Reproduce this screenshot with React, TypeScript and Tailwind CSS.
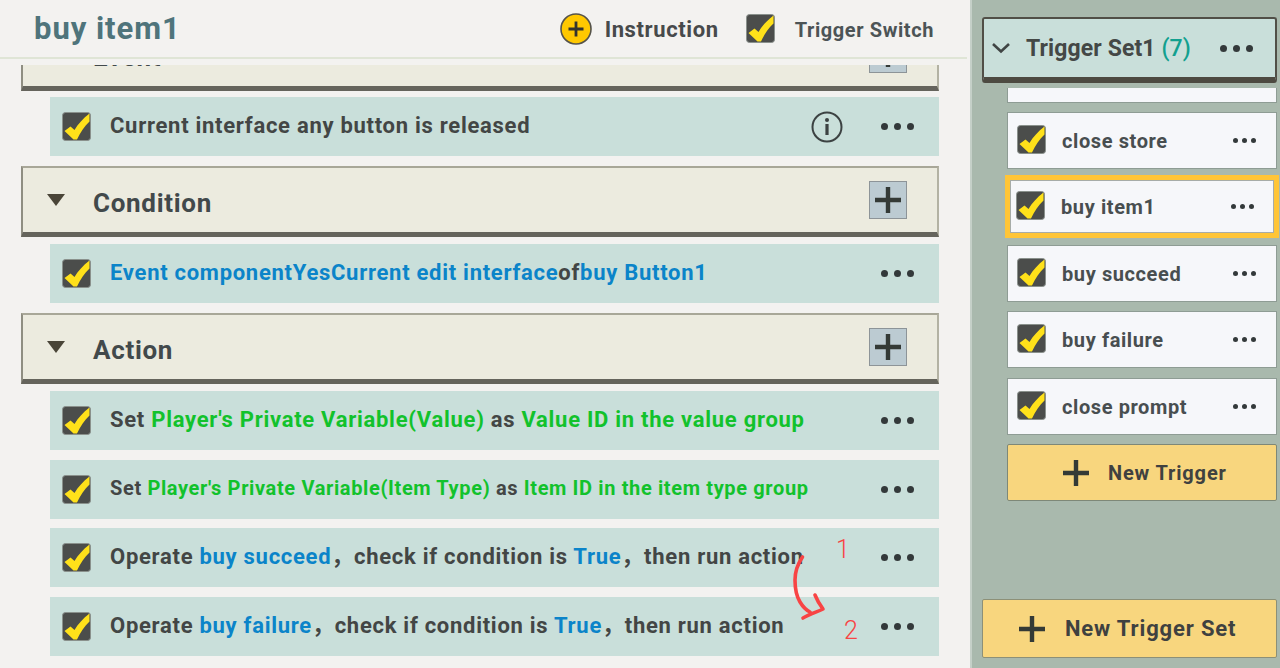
import type { ReactNode } from "react";

const font = { fontFamily: "Roboto, 'Noto Sans CJK SC', sans-serif" };

function Check({ className = "" }: { className?: string }) {
  return (
    <svg viewBox="0 0 29 29" className={`h-[29px] w-[29px] shrink-0 ${className}`}>
      <rect x="0.5" y="0.5" width="28" height="28" rx="3" fill="#4b4d4b" stroke="#8a918c" />
      <path d="M2.5 19 L8.5 14.5 L12.5 18 C16 12 21 6.5 27.5 1.5 L27.5 9.5 C22.5 14 18.5 20 15 27.5 L11.5 27.5 Z" fill="#ffe11a" />
    </svg>
  );
}

function Dots({ big = false }: { big?: boolean }) {
  const dot = big ? "h-[7px] w-[7px]" : "h-[5px] w-[5px]";
  return (
    <div className={`flex items-center ${big ? "gap-[6px]" : "gap-[4px]"}`}>
      <span className={`${dot} rounded-full bg-[#33393a]`} />
      <span className={`${dot} rounded-full bg-[#33393a]`} />
      <span className={`${dot} rounded-full bg-[#33393a]`} />
    </div>
  );
}

function Plus({ size = 26 }: { size?: number }) {
  return (
    <svg width={size} height={size} viewBox="0 0 26 26" className="shrink-0">
      <path d="M10.8 0h4.4v10.8H26v4.4H15.2V26h-4.4V15.2H0v-4.4h10.8z" fill="#343a36" />
    </svg>
  );
}

function SectionHeader({ title, className = "" }: { title: string; className?: string }) {
  return (
    <div
      className={`flex h-[71px] items-center border-t-2 border-r-2 border-b-[5px] border-l-2 border-t-[#a8a798] border-r-[#b3b2a3] border-b-[#65645c] border-l-[#8f8e82] bg-[#ecebdf] pr-[30px] pl-[24px] ${className}`}
    >
      <span className="h-0 w-0 border-x-[9px] border-t-[12px] border-x-transparent border-t-[#4a4538]" />
      <span className="mt-[6px] ml-[28px] text-[26px] font-bold tracking-[0.7px] text-[#42494b]">{title}</span>
      <span className="ml-auto flex h-[38px] w-[38px] items-center justify-center border border-[#8d9498] bg-[#bccbd2]">
        <Plus />
      </span>
    </div>
  );
}

function Row({ children, info = false, small = false }: { children: ReactNode; info?: boolean; small?: boolean }) {
  return (
    <div className="ml-[29px] flex h-[59px] items-center bg-[#c9dfda] pr-[25px] pl-[12px]">
      <Check />
      <div
        className={`ml-[19px] whitespace-pre font-bold text-[#434645] ${
          small ? "-mt-[3px] text-[20px] tracking-[0.63px]" : "-mt-[2px] text-[22px] tracking-[0.72px]"
        }`}
      >
        {children}
      </div>
      {info && (
        <svg viewBox="0 0 32 32" className="mr-[38px] ml-auto h-[32px] w-[32px]">
          <circle cx="16" cy="16" r="14.5" fill="none" stroke="#3c4242" strokeWidth="2" />
          <circle cx="16" cy="9" r="2" fill="#3c4242" />
          <rect x="14.4" y="13" width="3.2" height="11" fill="#3c4242" />
        </svg>
      )}
      <div className={info ? "" : "ml-auto"}>
        <Dots big />
      </div>
    </div>
  );
}

function Blue({ children }: { children: ReactNode }) {
  return <span className="text-[#0b84c9]">{children}</span>;
}

function Green({ children }: { children: ReactNode }) {
  return <span className="text-[#12c22c]">{children}</span>;
}

function TriggerItem({ name, className = "" }: { name: string; className?: string }) {
  return (
    <div className={`flex items-center bg-[#f6f7fa] pr-[20px] ${className}`}>
      <Check className="-mt-[2px]" />
      <span className="ml-[16px] text-[20px] font-bold tracking-[0.6px] text-[#484e50]">{name}</span>
      <div className="-mt-[1px] ml-auto">
        <Dots />
      </div>
    </div>
  );
}

export default function App() {
  return (
    <div className="relative flex h-[668px] w-[1280px] overflow-hidden bg-[#f3f2f0]" style={font}>
      <div className="flex w-[967px] shrink-0 flex-col">
        <header className="flex h-[59px] shrink-0 items-center border-b-2 border-[#dfe5d6] pr-[33px] pl-[34px]">
          <h1 className="mt-[1px] text-[31px] font-bold tracking-[0.95px] text-[#4f747b]">buy item1</h1>
          <svg viewBox="0 0 32 32" className="ml-auto h-[32px] w-[32px]">
            <circle cx="16" cy="16" r="15" fill="#ffc800" stroke="#55534a" strokeWidth="1.6" />
            <path d="M14.6 8.5h2.8v6.1h6.1v2.8h-6.1v6.1h-2.8v-6.1H8.5v-2.8h6.1z" fill="#33332e" />
          </svg>
          <span className="mt-[2px] ml-[13px] text-[22px] font-bold tracking-[0.6px] text-[#474a4b]">Instruction</span>
          <Check className="ml-[27px]" />
          <span className="mt-[2px] ml-[20px] text-[20px] font-bold tracking-[0.6px] text-[#4c5456]">Trigger Switch</span>
        </header>
        <div className="mt-[6px] min-h-0 flex-1 overflow-hidden pr-[28px] pl-[21px]">
          <div className="-mt-[45px] flex flex-col">
            <SectionHeader title="Event" />
            <div className="mt-[6px]">
              <Row info>Current interface any button is released</Row>
            </div>
            <SectionHeader title="Condition" className="mt-[10px]" />
            <div className="mt-[7px]">
              <Row>
                <Blue>Event componentYesCurrent edit interface</Blue>of<Blue>buy Button1</Blue>
              </Row>
            </div>
            <SectionHeader title="Action" className="mt-[10px]" />
            <div className="mt-[7px] flex flex-col gap-[10px]">
              <Row>
                Set <Green>Player's Private Variable(Value)</Green> as <Green>Value ID in the value group</Green>
              </Row>
              <Row small>
                Set <Green>Player's Private Variable(Item Type)</Green> as <Green>Item ID in the item type group</Green>
              </Row>
              <div className="-mt-px">
                <Row>
                  Operate <Blue>buy succeed</Blue>，check if condition is <Blue>True</Blue>，then run action
                </Row>
              </div>
              <Row>
                Operate <Blue>buy failure</Blue>，check if condition is <Blue>True</Blue>，then run action
              </Row>
            </div>
          </div>
        </div>
      </div>

      <aside className="ml-[3px] flex min-w-0 flex-1 flex-col border-l-2 border-[#c5d0c8] bg-[#a9b9ad] pr-[3px] pl-[10px]">
        <div className="mt-[17px] flex h-[66px] shrink-0 items-center rounded-[3px] border-t-2 border-r-2 border-b-[6px] border-l-2 border-t-[#514f47] border-r-[#514f47] border-b-[#4d4a41] border-l-[#514f47] bg-[#c9dfda] pr-[22px] pl-[7px]">
          <svg viewBox="0 0 20 12" className="h-[12px] w-[20px]">
            <path d="M2 2l8 7.5L18 2" fill="none" stroke="#404544" strokeWidth="2.6" />
          </svg>
          <span className="mt-[2px] ml-[15px] text-[23px] font-bold tracking-[0.1px] text-[#444846]">
            Trigger Set1 <span className="font-medium text-[#12a08f]">(7)</span>
          </span>
          <div className="ml-auto">
            <Dots big />
          </div>
        </div>
        <div className="mt-[5px] ml-[25px] flex flex-col">
          <div className="h-[15px] border-x border-b border-[#8e9c94] bg-[#f6f7fa]" />
          <TriggerItem name="close store" className="mt-[9px] h-[57px] border border-[#8e9c94] pl-[9px]" />
          <TriggerItem
            name="buy item1"
            className="-mx-[2px] mt-[6px] h-[63px] border-[5px] border-[#ffc537] pl-[6px] outline outline-offset-[-6px] outline-[#a7aca8]"
          />
          <TriggerItem name="buy succeed" className="mt-[7px] h-[57px] border border-[#8e9c94] pl-[9px]" />
          <TriggerItem name="buy failure" className="mt-[9px] h-[57px] border border-[#8e9c94] pl-[9px]" />
          <TriggerItem name="close prompt" className="mt-[10px] h-[57px] border border-[#8e9c94] pl-[9px]" />
          <button className="mt-[9px] flex h-[57px] items-center rounded-[2px] border border-[#7e8878] bg-[#f8d67e] pl-[55px] text-[20px] font-bold tracking-[0.85px] text-[#3f4140]">
            <Plus />
            <span className="ml-[19px]">New Trigger</span>
          </button>
        </div>
        <button className="mt-auto mb-[10px] flex h-[59px] shrink-0 items-center rounded-[2px] border border-[#8c9078] bg-[#f8d67e] pl-[36px] text-[22px] font-bold tracking-[0.85px] text-[#3f4140]">
          <Plus />
          <span className="ml-[20px]">New Trigger Set</span>
        </button>
      </aside>

      {/* red annotation drawn over the screenshot */}
      <svg viewBox="0 0 1280 668" className="pointer-events-none absolute inset-0 h-[668px] w-[1280px]">
        <path
          d="M802.5 557 C797 565 795 572 795 580 C795 590 797 597 800 602 C803 607 806 610 810 612 M815 595 C817 600 820 605 823 609 C817 612 810 614 803 618"
          fill="none"
          stroke="#f84444"
          strokeWidth="3.6"
          strokeLinecap="round"
          strokeLinejoin="round"
        />
      </svg>
      <span className="absolute top-[531px] left-[836px] text-[25px] font-light text-[#f84444]">1</span>
      <span className="absolute top-[612px] left-[844px] text-[25px] font-light text-[#f84444]">2</span>
    </div>
  );
}
